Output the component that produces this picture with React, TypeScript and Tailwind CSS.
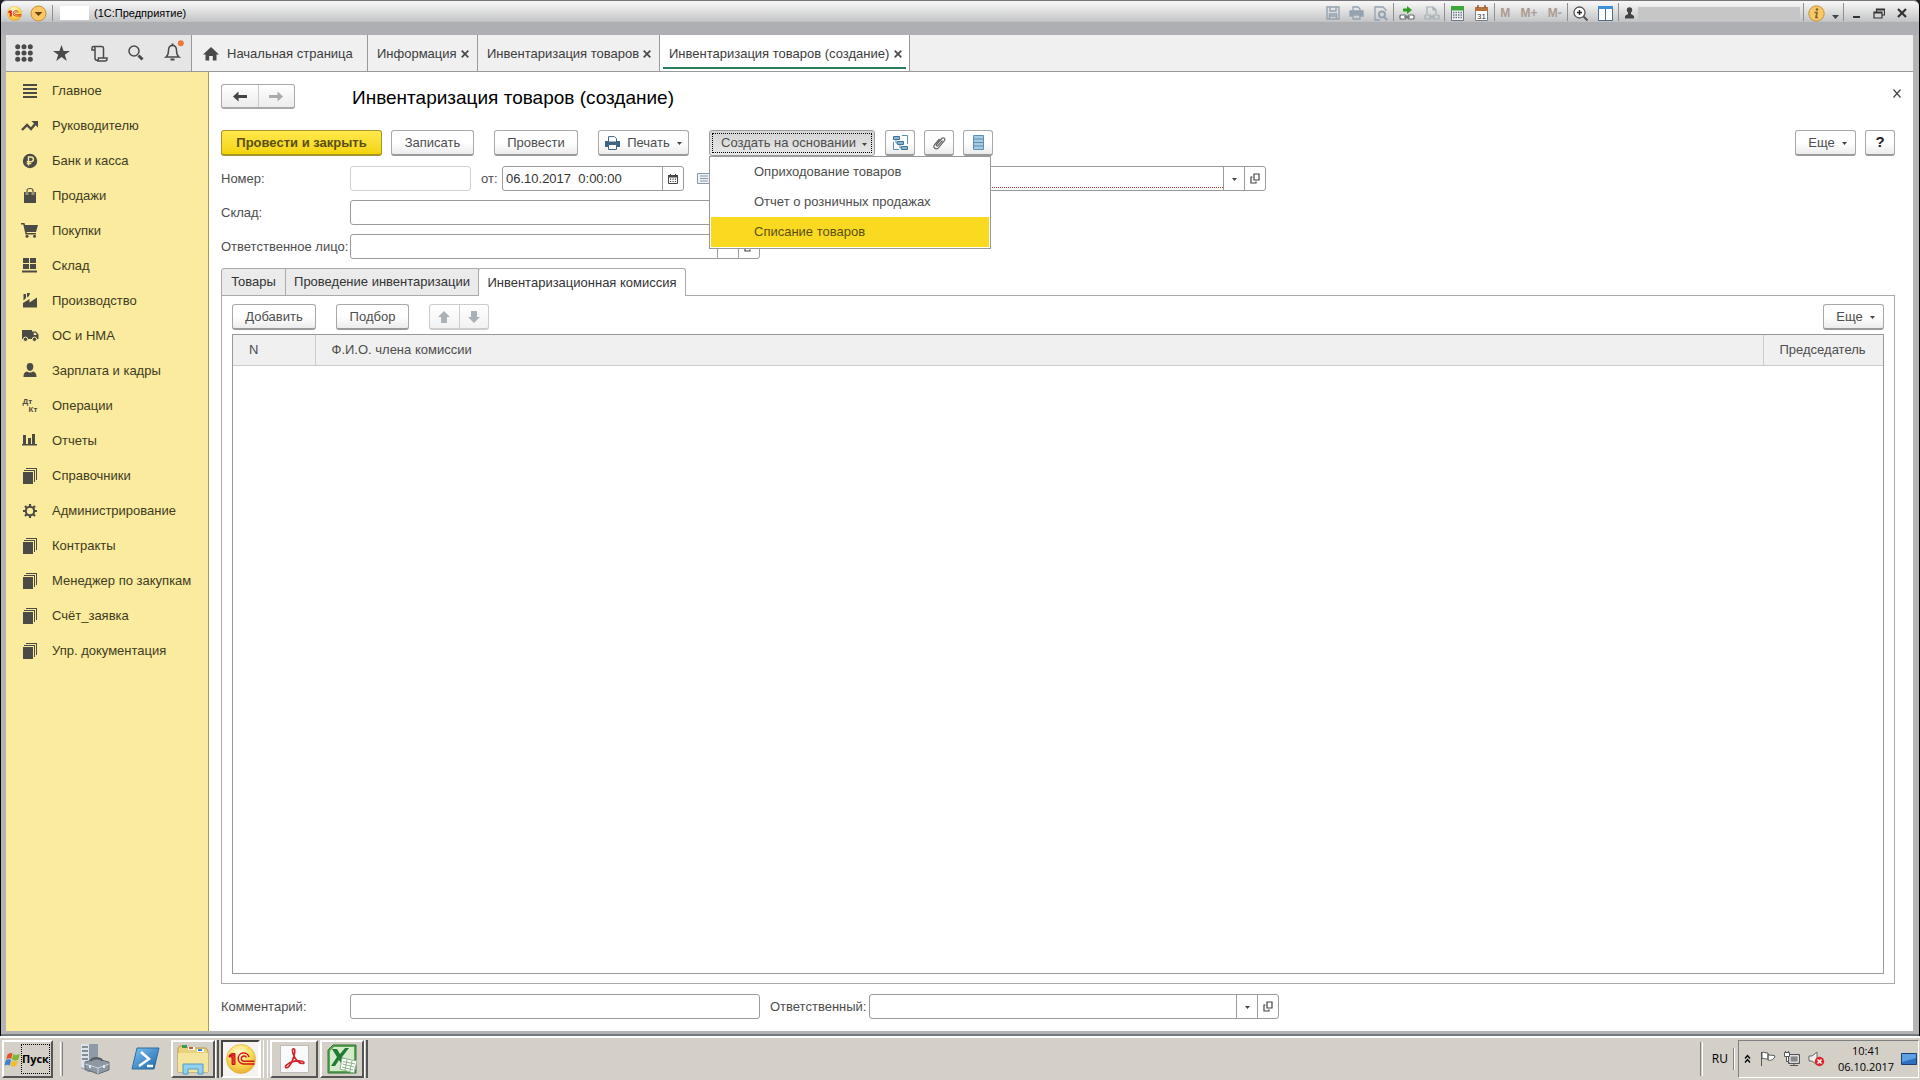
import React from "react";

type Kids = { children?: React.ReactNode };

const btnBase =
  "flex h-[26px] shrink-0 items-center justify-center rounded-[3px] border border-[#a8a8a8] border-b-2 border-b-[#9a9a9a] bg-linear-to-b from-white from-50% to-[#ececec] text-[#4d4d4d]";
const fieldBase = "h-[25px] rounded-[3px] border border-[#9b9b9b] bg-white";

function Caret() {
  return (
    <svg width="5" height="3" viewBox="0 0 5 3" className="mt-[2px] shrink-0" aria-hidden="true">
      <path d="M0 0h5L2.500 3z" fill="#444" />
    </svg>
  );
}

function OpenIcon() {
  return (
    <svg width="10" height="11" viewBox="0 0 10 11" fill="none" stroke="#444" strokeWidth="1.2" aria-hidden="true">
      <path d="M4 1h5v6H4z" />
      <path d="M2.500 4H1v6h5V8.500" />
    </svg>
  );
}

/* ---------- sidebar icons ---------- */

const Books = () => (
  <svg width="16" height="17" viewBox="0 0 16 17" fill="#4c4a44">
    <path d="M1 5h10v12H1z" />
    <path d="M2 3h11v12h-1V4H2zM4 1h11v12h-1V2H4z" />
  </svg>
);

const sideIcons: Record<string, React.ReactNode> = {
  main: (
    <svg width="16" height="16" viewBox="0 0 16 16" fill="#4c4a44">
      <path d="M1 1h14v2H1zM1 5h14v2H1zM1 9h14v2H1zM1 13h14v2H1z" />
    </svg>
  ),
  chief: (
    <svg width="18" height="14" viewBox="0 0 18 14">
      <path d="M1 11l5-5 4 4 5-6" fill="none" stroke="#4c4a44" strokeWidth="2.4" />
      <path d="M10.500 2H17v6.500z" fill="#4c4a44" />
    </svg>
  ),
  bank: (
    <svg width="16" height="16" viewBox="0 0 16 16">
      <circle cx="8" cy="8" r="7.200" fill="#4c4a44" />
      <path d="M6.500 12.500V4h2.600a2.200 2.200 0 010 4.700H4.700M4.700 10.600h4.600" fill="none" stroke="#faeb9e" strokeWidth="1.400" />
    </svg>
  ),
  sales: (
    <svg width="14" height="17" viewBox="0 0 14 17">
      <path d="M1 5h12v11H1z" fill="#4c4a44" />
      <path d="M4 8V3.500C4 .5 10 .5 10 3.500V8" fill="none" stroke="#faeb9e" strokeWidth="2.500" />
      <path d="M4 8V3.500C4 .8 10 .8 10 3.500V8" fill="none" stroke="#4c4a44" strokeWidth="1.100" />
    </svg>
  ),
  cart: (
    <svg width="18" height="15" viewBox="0 0 18 15" fill="#4c4a44">
      <path d="M0 0h3.500l.5 2h13l-2 7H5.500l.3 1H15v1.500H4.500L2.300 1.500H0z" />
      <circle cx="6" cy="13.300" r="1.500" />
      <circle cx="13.500" cy="13.300" r="1.500" />
    </svg>
  ),
  store: (
    <svg width="16" height="15" viewBox="0 0 16 15" fill="#4c4a44">
      <path d="M1 0h6v5H1zM8 0h6v5H8zM1 6h6v5H1zM8 6h6v5H8zM0 12.500h15v2H0z" />
    </svg>
  ),
  factory: (
    <svg width="16" height="15" viewBox="0 0 16 15" fill="#4c4a44">
      <path d="M1 14.500V10l6.500-4v3.500L15 4.500v10z" />
      <path d="M1.500 1h2.500v4L1.500 7.500zM5 0h3l-1 3-2 1.500z" />
    </svg>
  ),
  truck: (
    <svg width="18" height="12" viewBox="0 0 18 12" fill="#4c4a44">
      <path d="M1 0h10v9H1z" />
      <path fillRule="evenodd" d="M11 1.500h4l2.500 3V9H11zm1.700 1.300V5H16l-1.500-2.200z" />
      <circle cx="4.500" cy="9.300" r="2.200" stroke="#faeb9e" />
      <circle cx="13.500" cy="9.300" r="2.200" stroke="#faeb9e" />
    </svg>
  ),
  person: (
    <svg width="14" height="15" viewBox="0 0 14 15" fill="#4c4a44">
      <path d="M7 0c2.500 0 3.300 1.700 3.300 3.800C10.300 6 9 8 7 8S3.700 6 3.700 3.800C3.700 1.700 4.500 0 7 0z" />
      <path d="M4 8.500c1.500 1.300 4.500 1.300 6 0 2 .5 3.500 1.500 3.500 5.500H.5C.5 10 2 9 4 8.500z" />
    </svg>
  ),
  dtkt: (
    <span className="flex flex-col font-['Liberation_Sans'] text-[8px] leading-[8px] font-bold text-[#4c4a44]">
      <span>Дт</span>
      <span className="pl-[6px]">Кт</span>
    </span>
  ),
  chart: (
    <svg width="16" height="13" viewBox="0 0 16 13" fill="#4c4a44">
      <path d="M1 1h3v9H1zM6 4h3v6H6zM10 0h3v10h-3zM0 10h15v1.500H0z" />
    </svg>
  ),
  books: <Books />,
  gear: (
    <svg width="16" height="16" viewBox="0 0 16 16" fill="none" stroke="#4c4a44">
      <circle cx="8" cy="8" r="4.200" strokeWidth="2" />
      <g strokeWidth="2.200">
        <path d="M8 1v2.500M8 12.500V15M1 8h2.500M12.500 8H15M3 3l1.700 1.700M11.300 11.300L13 13M13 3l-1.700 1.700M4.700 11.300L3 13" />
      </g>
    </svg>
  ),
};

const sections: [string, string][] = [
  ["main", "Главное"],
  ["chief", "Руководителю"],
  ["bank", "Банк и касса"],
  ["sales", "Продажи"],
  ["cart", "Покупки"],
  ["store", "Склад"],
  ["factory", "Производство"],
  ["truck", "ОС и НМА"],
  ["person", "Зарплата и кадры"],
  ["dtkt", "Операции"],
  ["chart", "Отчеты"],
  ["books", "Справочники"],
  ["gear", "Администрирование"],
  ["books", "Контракты"],
  ["books", "Менеджер по закупкам"],
  ["books", "Счёт_заявка"],
  ["books", "Упр. документация"],
];

/* ---------- title bar ---------- */

function OneCLogo({ size }: { size: number }) {
  return (
    <svg width={size} height={size} viewBox="0 0 30 30" aria-label="1С">
      <defs>
        <radialGradient id="gold" cx="45%" cy="30%" r="75%">
          <stop offset="0" stopColor="#fffbe0" />
          <stop offset=".5" stopColor="#fde05a" />
          <stop offset="1" stopColor="#e8a92c" />
        </radialGradient>
      </defs>
      <circle cx="15" cy="15" r="14.500" fill="url(#gold)" stroke="#d9a53a" strokeWidth=".6" />
      <path
        d="M3 11.500h4.500M9 20.500V9.500H5.500L3 11.500v1.500h3v7.500z"
        fill="#e8372f"
        stroke="#c8141a"
        strokeWidth="1"
      />
      <path
        d="M23 13A5.500 5.500 0 1017.500 20H28.500M20.500 13.500a2.700 2.700 0 10-2.800 3.800H28.500"
        fill="none"
        stroke="#d4151b"
        strokeWidth="1.500"
      />
    </svg>
  );
}

function Group({ children, w }: Kids & { w: string }) {
  return <div className={`flex h-full items-center justify-around pt-[2px] ${w}`}>{children}</div>;
}
const Sep = () => <span className="h-[18px] w-px bg-[#8f8f8f]" />;

function IconBtn({ label, children }: Kids & { label: string }) {
  return (
    <button aria-label={label} className="flex items-center justify-center">
      {children}
    </button>
  );
}

function TitleBar() {
  return (
    <header className="flex h-[35px] items-start rounded-t-md border-t border-[#77757a] bg-linear-to-b from-[#f4f4f4] from-[6%] via-[#c4c5c7] via-[60%] to-[#aeafb2] to-[62%] font-['Liberation_Sans'] text-[12px] text-black">
      <div className="flex h-[22px] flex-1 items-center pt-[2px] pl-[6px]">
        <OneCLogo size={15} />
        <button aria-label="Меню" className="ml-2 flex">
          <svg width="17" height="17" viewBox="0 0 17 17">
            <circle cx="8.500" cy="8.500" r="7.500" fill="#fac766" stroke="#c98f35" />
            <path d="M4.500 7h8l-4 4z" fill="#6b4310" />
          </svg>
        </button>
        <span className="ml-[5px] h-4 w-px bg-[#8f8f8f]" />
        <span className="ml-[7px] h-[14px] w-[29px] bg-white" />
        <span className="ml-[5px] text-[11px]">(1С:Предприятие)</span>
      </div>
      <div className="flex h-[22px] items-center">
        <Group w="w-[72px]">
          <IconBtn label="Сохранить">
            <svg width="14" height="14" viewBox="0 0 14 14" fill="none" stroke="#94a3b0" strokeWidth="1.400">
              <path d="M1 1h12v12H1z" />
              <path d="M4 1v4h6V1M3.500 13V8h7v5M4 10h6" />
            </svg>
          </IconBtn>
          <IconBtn label="Печать">
            <svg width="15" height="14" viewBox="0 0 15 14" fill="none" stroke="#94a3b0" strokeWidth="1.300">
              <path d="M4 5V1h5l2 2v2M4 9h7v4H4z" />
              <path d="M1 5h13v5h-2.500V8h-8v2H1z" fill="#94a3b0" />
            </svg>
          </IconBtn>
          <IconBtn label="Предварительный просмотр">
            <svg width="14" height="15" viewBox="0 0 14 15" fill="none" stroke="#94a3b0" strokeWidth="1.300">
              <path d="M12 5V4L9 1H1v13h5" />
              <circle cx="8" cy="8.500" r="3" strokeWidth="2" />
              <path d="M10.200 11l3 3" strokeWidth="2" />
            </svg>
          </IconBtn>
        </Group>
        <Sep />
        <Group w="w-[50px]">
          <IconBtn label="Получить ссылку">
            <svg width="16" height="15" viewBox="0 0 16 15">
              <path d="M4 2.500h4V0l5 4-5 4V5.500H4z" fill="#2f9e22" />
              <g fill="#fff" stroke="#62686e" strokeWidth="1.200">
                <rect x="1" y="9" width="6" height="4" rx="1" />
                <rect x="9" y="9" width="6" height="4" rx="1" />
              </g>
              <path d="M5 11h6" stroke="#62686e" strokeWidth="1.200" />
            </svg>
          </IconBtn>
          <IconBtn label="Перейти по ссылке">
            <svg width="16" height="15" viewBox="0 0 16 15" fill="none" stroke="#a4adb5" strokeWidth="1.200">
              <path d="M3 8V1h6l3 3v4M9 1v3h3" />
              <rect x="1" y="9" width="6" height="4" rx="1" />
              <rect x="9" y="9" width="6" height="4" rx="1" />
              <path d="M5 11h6" />
            </svg>
          </IconBtn>
        </Group>
        <Sep />
        <Group w="w-[49px]">
          <IconBtn label="Калькулятор">
            <svg width="13" height="15" viewBox="0 0 13 15">
              <path d="M.5.500h12v14H.5z" fill="#f2f4f5" stroke="#6c7680" />
              <path d="M0 0h13v4.500H0z" fill="#3fa63a" />
              <g stroke="#6c7680" strokeWidth="1.500" strokeDasharray="1.500 1">
                <path d="M2 6.500h9M2 9h9M2 11.500h9" />
              </g>
            </svg>
          </IconBtn>
          <IconBtn label="Календарь">
            <svg width="13" height="16" viewBox="0 0 13 16">
              <path d="M.5 2.500h12v13H.5z" fill="#fff" stroke="#7c8187" />
              <path d="M0 2h13v4H0z" fill="#b6733c" />
              <path d="M3 0v3M10 0v3" stroke="#8a5227" strokeWidth="1.400" />
              <text x="6.500" y="13.500" textAnchor="middle" fontSize="8" fill="#333" fontFamily="Liberation Sans">
                31
              </text>
            </svg>
          </IconBtn>
        </Group>
        <Sep />
        <div className="flex h-full w-[72px] items-center justify-around pt-[2px] text-[12px] font-bold text-[#ab9c92]">
          <button>M</button>
          <button>M+</button>
          <button>M-</button>
        </div>
        <Sep />
        <Group w="w-[50px]">
          <IconBtn label="Масштаб">
            <svg width="15" height="15" viewBox="0 0 15 15">
              <circle cx="6.500" cy="6.500" r="5.500" fill="#fff" stroke="#555" strokeWidth="1.300" />
              <path d="M6.500 4v5M4 6.500h5" stroke="#222" strokeWidth="1.400" />
              <path d="M10.500 10.500l4 4" stroke="#555" strokeWidth="2" />
            </svg>
          </IconBtn>
          <IconBtn label="Окна">
            <svg width="15" height="15" viewBox="0 0 15 15">
              <path d="M.5.500h14v14H.5z" fill="#fff" stroke="#4f6e8c" />
              <path d="M0 0h15v3H0z" fill="#3f8fd6" />
              <path d="M7.500 3v12" stroke="#4f6e8c" />
            </svg>
          </IconBtn>
        </Group>
        <Sep />
        <div className="flex h-full w-[184px] items-center pt-[2px] pl-[6px]">
          <svg width="9" height="12" viewBox="0 0 9 12" fill="#444">
            <circle cx="4.500" cy="3" r="2.700" />
            <path d="M3 5h3v2l3 2v2.500H0V9l3-2z" />
          </svg>
          <span className="ml-1 h-[13px] w-[162px] bg-[#c6c6c6]" />
        </div>
        <Sep />
        <Group w="w-[39px]">
          <IconBtn label="О программе">
            <svg width="17" height="17" viewBox="0 0 17 17">
              <circle cx="8.500" cy="8.500" r="7.700" fill="#f8c867" stroke="#c4923b" />
              <circle cx="9" cy="4.500" r="1.300" fill="#7d6430" />
              <path d="M6.500 7.500h2.500l-1 5h2" fill="none" stroke="#7d6430" strokeWidth="1.600" />
            </svg>
          </IconBtn>
          <svg width="7" height="4" viewBox="0 0 7 4" className="mt-2">
            <path d="M0 0h7L3.500 4z" fill="#444" />
          </svg>
        </Group>
        <Sep />
        <Group w="w-[75px] pr-[6px]">
          <IconBtn label="Свернуть">
            <svg width="12" height="12" viewBox="0 0 12 12">
              <path d="M3 9h7v2H3z" fill="#333" />
            </svg>
          </IconBtn>
          <IconBtn label="Восстановить">
            <svg width="12" height="11" viewBox="0 0 12 11" fill="none" stroke="#333" strokeWidth="1.200">
              <path d="M3.500 3.500V1h8v6H9M1 4h8v6H1zM1 5h8M3.500 2h8" />
            </svg>
          </IconBtn>
          <IconBtn label="Закрыть">
            <svg width="10" height="10" viewBox="0 0 10 10">
              <path d="M1 1l8 8M9 1L1 9" stroke="#333" strokeWidth="2.200" />
            </svg>
          </IconBtn>
        </Group>
      </div>
    </header>
  );
}

/* ---------- tab strip ---------- */

function CloseX() {
  return (
    <button aria-label="Закрыть вкладку" className="flex">
      <svg width="8" height="8" viewBox="0 0 8 8">
        <path d="M.7.7l6.600 6.600M7.300.7L.7 7.300" stroke="#4a4a4a" strokeWidth="1.700" />
      </svg>
    </button>
  );
}

function TabStrip() {
  return (
    <nav className="flex h-[37px] border-b border-[#999] bg-[#f0f0f0] text-[13px] text-[#3c3c3c]">
      <div className="flex w-[185px] items-center justify-between bg-[#e6e6e6] pr-[7px] pl-[9px]">
        <IconBtn label="Все функции">
          <svg width="18" height="18" viewBox="0 0 18 18" fill="#4a4a4a">
            {[2.7, 9, 15.3].map((y) => [2.7, 9, 15.3].map((x) => <circle key={`${x}-${y}`} cx={x} cy={y} r="2.500" />))}
          </svg>
        </IconBtn>
        <IconBtn label="Избранное">
          <svg width="17" height="16" viewBox="0 0 17 16" fill="#4a4a4a">
            <path d="M8.500 0l2.100 6H17l-5.200 3.700 2 6.300-5.300-3.900L3.200 16l2-6.300L0 6h6.400z" />
          </svg>
        </IconBtn>
        <IconBtn label="История">
          <svg width="17" height="17" viewBox="0 0 17 17" fill="none" stroke="#4a4a4a" strokeWidth="1.500">
            <path d="M4 5H1V3.200C1 1 4 1 4 3.200V13c0 3 3.500 3 3.500 0h8.500v1c0 2-1 2-2 2H6M3 1.500h7.500c1.500 0 2 .8 2 2V13" />
          </svg>
        </IconBtn>
        <IconBtn label="Поиск">
          <svg width="16" height="16" viewBox="0 0 16 16" fill="none" stroke="#4a4a4a">
            <circle cx="6" cy="6" r="5" strokeWidth="1.500" />
            <path d="M10.500 10.500l4 4" strokeWidth="3" />
          </svg>
        </IconBtn>
        <IconBtn label="Оповещения">
          <svg width="20" height="22" viewBox="0 0 20 22" className="mb-1">
            <path d="M2 17c2-1.500 2.500-3 2.500-6.500C4.500 7 6 5.500 8.500 5.500s4 1.500 4 5c0 3.500.5 5 2.500 6.500z" fill="none" stroke="#4a4a4a" strokeWidth="1.500" />
            <path d="M8.500 3.500v2M6.500 19.500h4" stroke="#4a4a4a" strokeWidth="2" />
            <circle cx="16.800" cy="3.200" r="3" fill="#e8793a" />
          </svg>
        </IconBtn>
      </div>
      <div className="flex w-[176px] items-center border-l border-[#999] pt-[2px] pl-[11px]">
        <svg width="16" height="14" viewBox="0 0 16 14" fill="#4a4a4a">
          <path d="M8 0l8 7.500h-2.500V13.500H9.800V9H6.200v4.500H2.500V7.500H0z" />
        </svg>
        <a href="#home" className="ml-2 whitespace-nowrap">Начальная страница</a>
      </div>
      <div className="flex w-[110px] items-center justify-between border-l border-[#999] pt-[2px] pr-[8px] pl-[9px]">
        <a href="#info">Информация</a>
        <CloseX />
      </div>
      <div className="flex w-[182px] items-center justify-between border-l border-[#999] pt-[2px] pr-[8px] pl-[9px] whitespace-nowrap">
        <a href="#list">Инвентаризация товаров</a>
        <CloseX />
      </div>
      <div className="flex w-[251px] flex-col border-x border-[#999] bg-white px-[3px] whitespace-nowrap">
        <div className="flex flex-1 items-center justify-between border-b-2 border-[#2b7d5c] pt-[5px] pr-[4px] pl-[6px]">
          <a href="#new">Инвентаризация товаров (создание)</a>
          <CloseX />
        </div>
        <span className="h-[2px]" />
      </div>
    </nav>
  );
}

/* ---------- form parts ---------- */

function Combo({ id, w, required }: { id: string; w: string; required?: boolean }) {
  return (
    <div className={`flex ${fieldBase} ${w}`}>
      <div className="flex min-w-0 flex-1 pb-[2px]">
        <input id={id} className={required ? "w-full border-b border-dotted border-[#b03030] outline-none" : "w-full outline-none"} />
      </div>
      <button aria-label="Выбрать" className="flex w-[21px] items-center justify-center border-l border-[#9b9b9b]">
        <Caret />
      </button>
      <button aria-label="Открыть" className="flex w-[21px] items-center justify-center border-l border-[#9b9b9b]">
        <OpenIcon />
      </button>
    </div>
  );
}

function Label({ id, children }: Kids & { id: string }) {
  return (
    <label htmlFor={id} className="w-[129px] shrink-0 whitespace-nowrap">
      {children}
    </label>
  );
}

function More() {
  return (
    <button className={`${btnBase} w-[61px] gap-[7px] pl-1`}>
      Еще <Caret />
    </button>
  );
}

function CommandBar() {
  return (
    <div className="flex items-center">
      <button className="flex h-[26px] w-[161px] items-center justify-center rounded-[3px] border border-b-2 border-[#a8952a] bg-linear-to-b from-[#ffe94a] to-[#f4d400] font-bold whitespace-nowrap text-[#5b4f10]">
        Провести и закрыть
      </button>
      <button className={`${btnBase} ml-[9px] w-[83px]`}>Записать</button>
      <button className={`${btnBase} ml-5 w-[84px]`}>Провести</button>
      <button className={`${btnBase} ml-5 w-[91px] gap-[7px]`}>
        <svg width="15" height="14" viewBox="0 0 15 14">
          <path d="M0 5h15v6H0z" fill="#3f6585" />
          <path d="M3.500 6V.600h6l2 2V6z" fill="#fff" stroke="#3f6585" />
          <path d="M3.500 8.500h8v5h-8z" fill="#fff" stroke="#3f6585" />
        </svg>
        Печать <Caret />
      </button>
      <div className="relative ml-5">
        <button className="flex h-[26px] w-[166px] rounded-[3px] border border-[#9b9b9b] bg-linear-to-b from-[#d4d4d4] to-[#e8e8e8] p-[2px] text-[#4d4d4d]">
          <span className="flex h-full w-full items-center justify-center gap-[6px] border border-dotted border-black pl-1 whitespace-nowrap">
            Создать на основании <Caret />
          </span>
        </button>
        <div role="menu" className="absolute top-[26px] left-0 z-10 flex w-[282px] flex-col border border-[#999] bg-white px-px pb-px whitespace-nowrap text-[#4d4d4d]">
          <button role="menuitem" className="flex h-[30px] items-center pl-[43px]">Оприходование товаров</button>
          <button role="menuitem" className="flex h-[30px] items-center pl-[43px]">Отчет о розничных продажах</button>
          <button role="menuitem" className="flex h-[30px] items-center bg-[#fada20] pl-[43px] text-[#5b4f10]">Списание товаров</button>
        </div>
      </div>
      <button aria-label="Структура подчиненности" className={`${btnBase} ml-[10px] w-[30px]`}>
        <svg width="15" height="15" viewBox="0 0 15 15">
          <g fill="#8db4cf" stroke="#3c7499">
            <path d="M.5 1.500h6v3h-6zM4.500 6.500h6v3h-6zM8.500 11.500h6v3h-6z" />
          </g>
          <path d="M.5 7v7.500H6M9 .500h5.500V9M3 5v3h1.500M7 10v3h1.500" fill="none" stroke="#5d8fb0" />
        </svg>
      </button>
      <button aria-label="Присоединенные файлы" className={`${btnBase} ml-[9px] w-[30px]`}>
        <svg width="13" height="14" viewBox="0 0 13 14" fill="none" stroke="#666" strokeWidth="1.200">
          <path d="M9.500 4.500L5 9.700c-.9 1-2.300-.1-1.400-1.200l5.100-6c1.600-1.700 4.200.2 2.700 2.200l-6 7.200C3 14.300-.6 11.500 1.600 8.700L6.500 3" />
        </svg>
      </button>
      <button aria-label="Список" className={`${btnBase} ml-[9px] w-[30px]`}>
        <svg width="11" height="15" viewBox="0 0 11 15">
          <path d="M.5.500h10v14H.5z" fill="#a9cbe2" stroke="#5b8fb3" />
          <path d="M0 4h11M0 7.500h11M0 11h11" stroke="#5b8fb3" />
        </svg>
      </button>
      <div className="ml-auto flex gap-[9px]">
        <More />
        <button className={`${btnBase} w-[30px] text-[15px] font-bold text-[#222]`}>?</button>
      </div>
    </div>
  );
}

function DocumentForm() {
  return (
    <main className="flex min-w-0 flex-1 flex-col bg-white pr-[18px] pb-3 pl-3 text-[13px] text-[#4d4d4d]">
      <div className="flex items-start pt-3">
        <div className="flex h-[25px] w-[74px] rounded-[3px] border border-b-2 border-[#a8a8a8] bg-linear-to-b from-white to-[#ececec]">
          <button aria-label="Назад" className="flex flex-1 items-center justify-center border-r border-[#ccc]">
            <svg width="14" height="11" viewBox="0 0 14 11" fill="#444">
              <path d="M0 5.500L5.500.500v3.600H14v2.800H5.500v3.600z" />
            </svg>
          </button>
          <button aria-label="Вперед" className="flex flex-1 items-center justify-center">
            <svg width="14" height="11" viewBox="0 0 14 11" fill="#aaa">
              <path d="M14 5.500L8.500.500v3.600H0v2.800h8.500v3.600z" />
            </svg>
          </button>
        </div>
        <h1 className="ml-[57px] text-[19px] leading-[27px] text-black">Инвентаризация товаров (создание)</h1>
        <button aria-label="Закрыть" className="-mr-[6px] mt-[5px] ml-auto flex">
          <svg width="8" height="9" viewBox="0 0 8 9">
            <path d="M.5.500l7 8M7.500.500l-7 8" stroke="#444" strokeWidth="1.200" />
          </svg>
        </button>
      </div>

      <div className="mt-[19px]">
        <CommandBar />
      </div>

      <div className="mt-[10px] flex flex-col gap-[9px]">
        <div className="flex items-center">
          <Label id="num">Номер:</Label>
          <input id="num" className="h-[25px] w-[121px] rounded-[3px] border border-[#d2d2d2] bg-white" />
          <label htmlFor="date" className="ml-[10px] w-[21px]">от:</label>
          <div className={`flex w-[182px] ${fieldBase}`}>
            <input id="date" defaultValue={"06.10.2017\u00a0\u00a00:00:00"} className="min-w-0 flex-1 pl-[3px] text-[#333] outline-none" />
            <button aria-label="Выбрать дату" className="flex w-[21px] items-center justify-center border-l border-[#9b9b9b]">
              <svg width="10" height="10" viewBox="0 0 10 10">
                <path d="M.5 1.500h9v8h-9z" fill="#fff" stroke="#444" />
                <path d="M0 1h10v2.500H0zM2 0h1v2H2zM7 0h1v2H7z" fill="#444" />
                <path d="M2 5.200h6M2 7.500h6" stroke="#444" strokeWidth="1.200" strokeDasharray="1.200 1.200" />
              </svg>
            </button>
          </div>
          <svg width="14" height="11" viewBox="0 0 14 11" className="ml-[13px]">
            <path d="M.5.500h13v10H.5z" fill="#eef2f6" stroke="#8a98a8" />
            <path d="M3 3h8M3 5.500h8M3 8h8" stroke="#8a98a8" />
          </svg>
          <div className="ml-[100px]">
            <Combo id="org" w="w-[455px]" required />
          </div>
        </div>
        <div className="flex items-center">
          <Label id="store">Склад:</Label>
          <Combo id="store" w="w-[410px]" />
        </div>
        <div className="flex items-center">
          <Label id="person">Ответственное лицо:</Label>
          <Combo id="person" w="w-[410px]" />
        </div>
      </div>

      <section className="mt-[9px] flex flex-1 flex-col">
        <div role="tablist" className="z-[1] -mb-px flex h-[28px] text-[#333]">
          <button role="tab" className="w-[65px] rounded-tl-[3px] border border-[#aaa] bg-[#ebebeb]">Товары</button>
          <button role="tab" className="-ml-px w-[194px] border border-[#aaa] bg-[#ebebeb] whitespace-nowrap">
            Проведение инвентаризации
          </button>
          <button role="tab" aria-selected="true" className="-ml-px w-[208px] rounded-t-[3px] border border-b-0 border-[#aaa] bg-white whitespace-nowrap">
            Инвентаризационная комиссия
          </button>
        </div>
        <div className="flex flex-1 flex-col border border-[#aaa] px-[10px] pt-2 pb-[9px]">
          <div className="flex items-center">
            <button className={`${btnBase} w-[84px]`}>Добавить</button>
            <button className={`${btnBase} ml-5 w-[73px]`}>Подбор</button>
            <div className="ml-5 flex h-[26px] w-[60px] rounded-[3px] border border-b-2 border-[#ccc] bg-linear-to-b from-white to-[#f2f2f2]">
              <button aria-label="Вверх" className="flex flex-1 items-center justify-center border-r border-[#ccc]">
                <svg width="12" height="12" viewBox="0 0 12 12" fill="#aab2b8">
                  <path d="M6 0l6 6H9v6H3V6H0z" />
                </svg>
              </button>
              <button aria-label="Вниз" className="flex flex-1 items-center justify-center">
                <svg width="12" height="12" viewBox="0 0 12 12" fill="#aab2b8">
                  <path d="M6 12l6-6H9V0H3v6H0z" />
                </svg>
              </button>
            </div>
            <div className="ml-auto">
              <More />
            </div>
          </div>
          <div className="mt-1 flex-1 border border-[#999]">
            <table className="w-full table-fixed border-collapse">
              <thead>
                <tr className="h-[30px] border-b border-[#ccc] bg-[#f0f0f0] text-left">
                  <th className="w-[82px] border-r border-[#ccc] pl-4 font-normal">N</th>
                  <th className="border-r border-[#ccc] pl-4 font-normal">Ф.И.О. члена комиссии</th>
                  <th className="w-[120px] pl-4 font-normal">Председатель</th>
                </tr>
              </thead>
            </table>
          </div>
        </div>
      </section>

      <div className="mt-[10px] flex items-center">
        <Label id="comment">Комментарий:</Label>
        <input id="comment" className={`w-[410px] ${fieldBase}`} />
        <label htmlFor="resp" className="ml-[10px] w-[99px] whitespace-nowrap">Ответственный:</label>
        <Combo id="resp" w="w-[410px]" />
      </div>
    </main>
  );
}

/* ---------- taskbar ---------- */

const raised = "border-2 border-t-white border-l-white border-r-[#555] border-b-[#555]";

function TaskButton({ label, children, stacked }: Kids & { label: string; stacked?: boolean }) {
  return (
    <div className="flex h-[38px] w-12">
      <button aria-label={label} className={`flex flex-1 items-center justify-center ${raised}`}>
        {children}
      </button>
      {stacked && <span className="w-1 border-r-2 border-l border-r-[#555] border-l-white" />}
    </div>
  );
}

function Taskbar() {
  return (
    <footer className="flex h-11 items-center border-t-2 border-white bg-[#d4d0c8] pl-[2px] text-black">
      <button className={`flex h-[38px] w-[51px] items-center ${raised}`}>
        <svg width="17" height="15" viewBox="0 0 17 15" className="shrink-0">
          <path d="M3.500 2.500C5 .8 7 .5 8.500 1.500L7.300 7C6 6 4 6 2 7.500z" fill="#e0532a" />
          <path d="M9.300 2c2 1.300 4 1.300 6.700-.5l-1.700 6c-2 1.300-4 1.300-6.200 0z" fill="#7db82f" />
          <path d="M1.700 8.500c2-1.500 4-1.500 5.300-.5l-1.200 5.500c-1.500-1-3.500-1-5.300.3z" fill="#3f7fd0" />
          <path d="M7.900 8.500c2 1.300 4 1.300 6.100 0l-1.500 5c-2 1.500-4 1.500-6 .2z" fill="#f4bd26" />
        </svg>
        <span className="flex h-[30px] items-center border border-dotted border-black font-['Open_Sans'] text-[11px] font-bold">Пуск</span>
      </button>
      <span className="ml-[7px] h-[34px] w-[3px] border-r border-l border-r-[#808080] border-l-white" />
      <button aria-label="Диспетчер сервера" className="ml-[17px] flex">
        <svg width="30" height="32" viewBox="0 0 30 32">
          <path d="M1 1h17v28H8l-7-4z" fill="#8e9aa6" />
          <path d="M1 1h8v27l-8-4z" fill="#dce3ea" />
          <path d="M2 4h6M2 8h6M2 12h6M2 16h6" stroke="#66727e" strokeWidth="1.500" />
          <path d="M5 19l12-3 12 3v8l-11 4-13-5z" fill="#8d98a2" stroke="#626c75" />
          <path d="M5 21l13 4 11-4M18 25v6" fill="none" stroke="#cbd3da" />
          <path d="M11 18c0-4 11-4 11 0" fill="none" stroke="#4c545b" strokeWidth="1.500" />
          <path d="M10 22v3M24 22v3" stroke="#e4e9ed" strokeWidth="2" />
        </svg>
      </button>
      <button aria-label="PowerShell" className="ml-5 flex">
        <svg width="30" height="26" viewBox="0 0 30 26">
          <defs>
            <linearGradient id="ps" x1="0" y1="0" x2="1" y2="1">
              <stop offset="0" stopColor="#7cc4ee" />
              <stop offset="1" stopColor="#1c63ae" />
            </linearGradient>
          </defs>
          <path d="M7 2h22l-5 21H2z" fill="url(#ps)" stroke="#2c6ba5" />
          <path d="M11 6l8 7-10 7M17 20h6" fill="none" stroke="#fff" strokeWidth="2.500" />
        </svg>
      </button>
      <div className="ml-[11px] flex gap-[2px]">
        <TaskButton label="Проводник" stacked>
          <svg width="32" height="32" viewBox="0 0 32 32">
            <path d="M1 5l2-2h6l2 2h18l2 3v21H1z" fill="#ead27c" stroke="#b89a45" />
            <path d="M5 2h5v3H5z" fill="#3d9c50" />
            <path d="M11 4h7v3h-7z" fill="#fff" />
            <path d="M12 4h4v2h-4z" fill="#d5562f" />
            <path d="M20 6h7v3h-7z" fill="#fff" />
            <path d="M21 6h4v2h-4z" fill="#3a85d0" />
            <path d="M1 10h30v19H1z" fill="#f5e49b" />
            <path d="M6 31V21h20v10h-5v-5H11v5z" fill="#93d0ee" stroke="#4e9cc6" />
          </svg>
        </TaskButton>
        <div className="flex h-[38px] w-[47px]">
          <button aria-label="1С:Предприятие" className="flex flex-1 items-center justify-center border-2 border-t-[#444] border-r-white border-b-white border-l-[#444] bg-[#f6f4f0]">
            <OneCLogo size={30} />
          </button>
          <span className="w-1 border-r border-l border-white" />
          <span className="w-1 border-r border-white" />
        </div>
        <TaskButton label="Acrobat Reader">
          <svg width="29" height="29" viewBox="0 0 29 29">
            <path d="M.5.500h28v27H.5z" fill="#fafafa" stroke="#bbb" />
            <path
              d="M13 4c2.500-1 2 3.500 1 7-1.500 5-4 10-6.500 11.500-2 1-3-1-1-2.500 3-2.500 9-4.500 14-4 4 .4 4.500 2.500 2 2.500-4 0-8-5-9.500-10C12.400 6.500 12 4.500 13 4z"
              fill="none"
              stroke="#d3222a"
              strokeWidth="1.600"
            />
          </svg>
        </TaskButton>
        <TaskButton label="Excel" stacked>
          <svg width="30" height="30" viewBox="0 0 30 30">
            <path d="M6 1h23v28H1V6z" fill="#5aa653" stroke="#2d7332" />
            <path d="M7 3h20v24H3V7z" fill="#d3ebcb" />
            <path d="M5 5h5l3 5 5-6h4l-7 9 6 9h-5l-4-6-4 6H4l6-9z" fill="#1f7a34" />
            <path d="M15 14l15 3-3 12-14-4z" fill="#fff" stroke="#8fb58c" />
            <path d="M16 17.500l12 2.500M15.500 20l12 3M15 23l11 3M20 15.500L18 26M25 16.500L23 27" stroke="#8fb58c" />
          </svg>
        </TaskButton>
      </div>
      <span className="ml-auto h-[34px] w-[3px] border-r border-l border-r-white border-l-[#808080]" />
      <span className="ml-[9px] font-['Open_Sans'] text-[12px]">RU</span>
      <span className="ml-[5px] h-[22px] w-[2px] border-r border-l border-r-white border-l-[#808080]" />
      <div className="mr-px ml-[3px] flex h-[38px] w-[181px] items-center border border-t-[#808080] border-r-white border-b-white border-l-[#808080] pl-[5px]">
        <svg width="7" height="10" viewBox="0 0 7 10" fill="none" stroke="#000" strokeWidth="1.300">
          <path d="M1 4.500l2.500-3L6 4.500M1 8.500l2.500-3L6 8.500" />
        </svg>
        <svg width="16" height="16" viewBox="0 0 16 16" className="ml-[9px]" fill="#fff" stroke="#555">
          <path d="M1.500 15V1M2 1.500c2-1 4 1 6 .5v6c-2 .5-4-1-6-.5zM8 3.500c3 1.500 4 0 7 1.500-1 3-3 5-7 4z" />
        </svg>
        <svg width="16" height="16" viewBox="0 0 16 16" className="ml-2" stroke="#555">
          <path d="M4.500 3.500h11v9h-11z" fill="#9a9a9a" />
          <path d="M6 4.800h8.200v6.400H6z" fill="#888" stroke="#fff" />
          <path d="M6 14.500h8M10 12.500v2" />
          <path d="M.5 1.500h5v4h-5zM2.500 5.500v5h2v-5M1.500 0v2M4.500 0v2" fill="#fff" />
        </svg>
        <svg width="17" height="16" viewBox="0 0 17 16" className="ml-2">
          <path d="M1 5h3l5-4v13l-5-4H1z" fill="#eee" stroke="#666" />
          <circle cx="11.500" cy="10.500" r="4.700" fill="#d8262c" />
          <path d="M9.500 8.500l4 4M13.500 8.500l-4 4" stroke="#fff" strokeWidth="1.500" />
        </svg>
        <div className="ml-[13px] text-center font-['Open_Sans'] text-[11px] leading-4">
          <div>10:41</div>
          <div>06.10.2017</div>
        </div>
        <svg width="16" height="13" viewBox="0 0 16 13" className="ml-[7px]">
          <path d="M.5.500h15v11H.5z" fill="#2f6fc0" stroke="#1c3f78" />
          <path d="M1 1h14v4L1 9z" fill="#5fa0e4" />
        </svg>
      </div>
    </footer>
  );
}

export default function App() {
  return (
    <div className="flex min-h-screen flex-col bg-[#222] font-['Liberation_Sans',sans-serif]">
      <div className="flex flex-1 flex-col rounded-t-md border-x border-black bg-[#b4b3b6]">
        <TitleBar />
        <div className="flex flex-1 flex-col pr-[6px] pl-[5px]">
          <TabStrip />
          <div className="flex flex-1">
            <aside className="w-[203px] shrink-0 border-r border-[#a89f55] bg-[#faeb9e] text-[13px] text-[#3f3b22]">
              <ul className="pt-px">
                {sections.map(([icon, name]) => (
                  <li key={name}>
                    <a href="#section" className="flex h-[35px] items-center pl-[14px] whitespace-nowrap">
                      <span className="flex w-5 items-center justify-center">{sideIcons[icon]}</span>
                      <span className="ml-3">{name}</span>
                    </a>
                  </li>
                ))}
              </ul>
            </aside>
            <DocumentForm />
          </div>
        </div>
        <div className="mt-[3px] h-[2px] bg-[#77787a]" />
      </div>
      <Taskbar />
    </div>
  );
}
